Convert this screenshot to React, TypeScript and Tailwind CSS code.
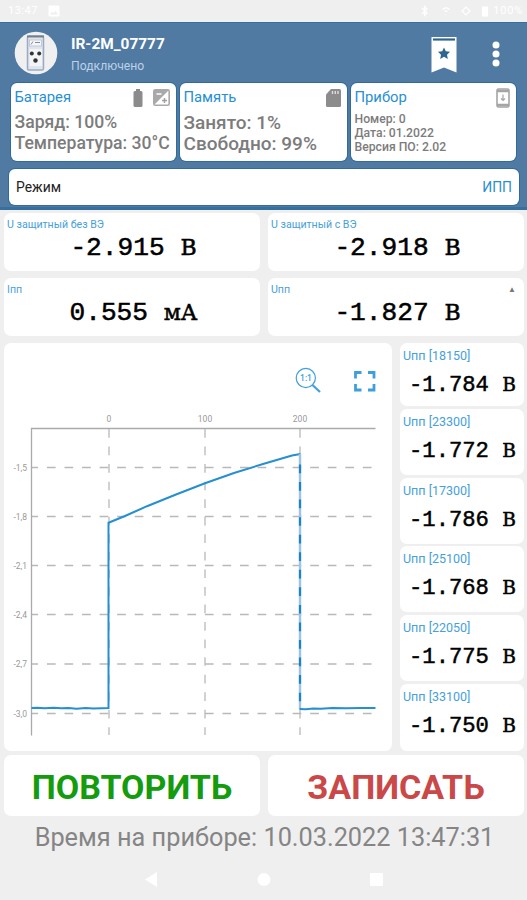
import type { ReactNode } from "react";

const FONT = "font-['Roboto','Open_Sans',sans-serif]";

const samples = [
	{ label: "Uпп [18150]", value: "-1.784", h: "h-[63px]" },
	{ label: "Uпп [23300]", value: "-1.772", h: "h-[66px]" },
	{ label: "Uпп [17300]", value: "-1.786", h: "h-[66px]" },
	{ label: "Uпп [25100]", value: "-1.768", h: "h-[66px]" },
	{ label: "Uпп [22050]", value: "-1.775", h: "h-[66px]" },
	{ label: "Uпп [33100]", value: "-1.750", h: "h-[67px]" },
];

const xTicks = [
	{ x: 109, label: "0" },
	{ x: 205, label: "100" },
	{ x: 300, label: "200" },
];

const yTicks = [
	{ y: 467.5, label: "-1,5" },
	{ y: 516.5, label: "-1,8" },
	{ y: 565.5, label: "-2,1" },
	{ y: 614.5, label: "-2,4" },
	{ y: 664, label: "-2,7" },
	{ y: 713.5, label: "-3,0" },
];

function StatusBar() {
	return (
		<div className="flex h-[22px] shrink-0 items-center pl-2 pr-1 text-[11px] text-white">
			<span className="tracking-[0.5px]">13:47</span>
			<svg className="ml-2.5" width="12" height="12" viewBox="0 0 12 12" fill="#fff">
				<path d="M1.5 0.5h9a1 1 0 0 1 1 1v9a1 1 0 0 1-1 1h-9a1 1 0 0 1-1-1v-9a1 1 0 0 1 1-1zM2 9.5h8L7.5 6 5.5 8.3 4 6.8z" fillRule="evenodd" />
			</svg>
			<svg className="ml-auto" width="69" height="14" viewBox="416 4 69 14" fill="none" stroke="#fff" strokeWidth="1.2">
				<path d="M418 8l5 5-2.5 2.5v-9L423 9l-5 5" />
				<path d="M438.500 10a4 4 0 0 1 7 0M440.500 11.500a2 2 0 0 1 3 0M442 14v.5" />
				<path d="M458 11l4-4 4 4-4 4z" />
				<path d="M478.500 7h5v9h-5z" fill="#fff" />
			</svg>
			<span className="ml-1 tracking-[0.8px]">100%</span>
		</div>
	);
}

function DeviceLogo() {
	return (
		<svg className="shrink-0" width="44" height="44" viewBox="0 0 44 44">
			<circle cx="22" cy="22" r="21.3" fill="#f0f0f0" />
			<rect x="13.5" y="5" width="16" height="34" rx="1.5" fill="#dfe5ee" stroke="#9aacc3" strokeWidth="1.5" />
			<path d="M13 5.5h17" stroke="#777f8b" strokeWidth="2" />
			<rect x="15.5" y="9" width="12" height="6" fill="#f5f6f8" stroke="#b9c3d0" strokeWidth="0.8" />
			<path d="M17 13.5l2-3M21 11.5h5" stroke="#858d98" strokeWidth="1" />
			<rect x="15.5" y="18" width="12.5" height="17" fill="#f3f4f6" />
			<circle cx="17.8" cy="22.5" r="2" fill="#333" />
			<circle cx="25.2" cy="22.5" r="2" fill="#333" />
			<circle cx="21.5" cy="29.5" r="2.2" fill="#333" />
		</svg>
	);
}

function InfoCard({ title, icons, width, children }: { title: string; icons: ReactNode; width: string; children: ReactNode }) {
	return (
		<div className={`${width} h-[78px] rounded-[6px] bg-white pl-[3.500px] pr-1.5 shadow-[0_0_0_1px_#2f6c9e]`}>
			<div className="flex h-[29px] items-center justify-between">
				<span className="text-[14.800px] text-[#2790d3]">{title}</span>
				<div className="flex items-center gap-2.5">{icons}</div>
			</div>
			{children}
		</div>
	);
}

function Header() {
	return (
		<header className="h-[188px] shrink-0 border-b-[3px] border-t border-[#36709f] bg-[#507aa2]">
			<div className="flex h-[60px] items-center pl-3.5 pr-[26px]">
				<DeviceLogo />
				<div className="ml-[13px] mt-1">
					<div className="text-[15.400px] font-bold leading-[17px] text-white">IR-2M_07777</div>
					<div className="mt-[6px] text-[12.200px] leading-[15px] text-[#bcd1e8]">Подключено</div>
				</div>
				<svg className="ml-auto mt-[3px]" width="26" height="38" viewBox="0 0 26 38">
					<path d="M0.5 1h25v35.500l-12.500-5L.5 36.500z" fill="#fff" />
					<path d="M2 3.500h22" stroke="#2f6591" strokeWidth="2.2" />
					<path d="M13 11.500l1.800 3.800 4.200.5-3 2.900.8 4.200-3.800-2.100-3.800 2.100.8-4.200-3-2.900 4.200-.5z" fill="#2f6591" />
				</svg>
				<svg className="ml-[34px] mt-px" width="10" height="28" viewBox="0 0 10 28" fill="#fff">
					<circle cx="5" cy="5" r="3.500" />
					<circle cx="5" cy="14" r="3.500" />
					<circle cx="5" cy="23" r="3.500" />
				</svg>
			</div>

			<div className="flex gap-1 pl-[11px]">
				<InfoCard
					title="Батарея"
					width="w-[165px]"
					icons={
						<>
							<svg width="10" height="18" viewBox="0 0 10 18" fill="#8b8b8b">
								<path d="M3 0h4v2h1a1.500 1.500 0 0 1 1.500 1.500v13A1.500 1.500 0 0 1 8 18H2a1.500 1.500 0 0 1-1.500-1.500v-13A1.500 1.500 0 0 1 2 2h1z" />
							</svg>
							<svg width="17" height="17" viewBox="0 0 17 17">
								<rect x="0.8" y="0.8" width="15.400" height="15.400" rx="1.500" fill="#fff" stroke="#a9a9a9" strokeWidth="1.6" />
								<path d="M1 1h15L1 16z" fill="#a9a9a9" />
								<path d="M9 11.500h5M11.500 9v5" stroke="#a0a0a0" strokeWidth="1.5" />
								<path d="M3.500 5h5" stroke="#fff" strokeWidth="1.5" />
							</svg>
						</>
					}
				>
					<div className="whitespace-nowrap text-[17.600px] font-medium leading-[21px] text-[#7c7c7c]">
						<div>Заряд: 100%</div>
						<div>Температура: 30°C</div>
					</div>
				</InfoCard>
				<InfoCard
					title="Память"
					width="w-[167px]"
					icons={
						<svg width="15" height="18" viewBox="0 0 15 18">
							<path d="M5 0h8.500A1.500 1.500 0 0 1 15 1.500v15a1.500 1.500 0 0 1-1.500 1.500h-12A1.500 1.500 0 0 1 0 16.500V5.500z" fill="#8c8c8c" />
							<path d="M6.500 2v3M9.300 2v3M12 2v3" stroke="#ddd" strokeWidth="1.4" />
						</svg>
					}
				>
					<div className="whitespace-nowrap text-[19px] font-medium leading-[21px] text-[#7c7c7c]">
						<div>Занято: 1%</div>
						<div>Свободно: 99%</div>
					</div>
				</InfoCard>
				<InfoCard
					title="Прибор"
					width="w-[165px]"
					icons={
						<svg width="14" height="20" viewBox="0 0 14 20" fill="none" stroke="#a5a5a5">
							<rect x="1" y="1" width="12" height="18" rx="1.5" strokeWidth="1.6" />
							<path d="M1 3h12M1 17h12" strokeWidth="2.5" />
							<path d="M7 6.500v6M5 10.500l2 2 2-2" strokeWidth="1.2" />
						</svg>
					}
				>
					<div className="whitespace-nowrap text-[12.200px] font-medium leading-[14px] text-[#7c7c7c]">
						<div>Номер: 0</div>
						<div>Дата: 01.2022</div>
						<div>Версия ПО: 2.02</div>
					</div>
				</InfoCard>
			</div>

			<div className="ml-[9px] mt-2 flex h-9 w-[510px] items-center justify-between rounded-[6px] bg-white pl-[7px] pr-[7px] text-[13.900px] shadow-[0_0_0_1px_#2f6c9e]">
				<span className="text-[#222]">Режим</span>
				<span className="text-[#2790d3]">ИПП</span>
			</div>
		</header>
	);
}

function Unit({ text }: { text: string }) {
	return <span className="font-['DejaVu_Serif',serif] text-[0.84em]">{text}</span>;
}

function Reading({ label, value, unit, marker }: { label: string; value: string; unit: string; marker?: boolean }) {
	return (
		<div className="relative h-[58px] flex-1 rounded-[7px] bg-white">
			<div className="pl-[3px] pt-[5px] text-[10.600px] leading-[13px] text-[#479fdb]">{label}</div>
			<div className="mt-[2px] whitespace-pre pl-[3px] text-center font-['Liberation_Mono',monospace] text-[26.200px] leading-[30px] text-black [-webkit-text-stroke:0.5px_#000]">
				{value} <Unit text={unit} />
			</div>
			{marker && <span className="absolute right-2 top-[7px] text-[8px] leading-[10px] text-[#777]">▲</span>}
		</div>
	);
}

function Chart() {
	return (
		<div className="h-[408px] w-[388px] rounded-[7px] bg-white">
			<svg width="388" height="408" viewBox="4 343 388 408" fill="none">
				<g stroke="#42a0da">
					<circle cx="305.800" cy="378" r="9.600" strokeWidth="1.2" />
					<path d="M312.500 385l7.500 7" strokeWidth="2.2" />
				</g>
				<text x="306" y="381" textAnchor="middle" fill="#42a0da" className="text-[8.500px] font-medium">1:1</text>
				<path d="M355.500 378.500v-6h6M368 372.500h6v6M374 384v6h-6M361.500 390h-6v-6" stroke="#3da0dc" strokeWidth="2.8" />

				<g stroke="#b9b9b9" strokeWidth="1.3" strokeDasharray="8.7 8.85">
					{yTicks.map((t) => (
						<path key={t.label} d={`M31 ${t.y}H373`} strokeDashoffset="1.6" />
					))}
					{xTicks.map((t) => (
						<path key={t.label} d={`M${t.x} 429V735`} />
					))}
				</g>
				<path d="M31.500 735.500V428.500H375.500" stroke="#aaa" strokeWidth="1.3" />

				<g fill="#999" className="text-[8.500px]">
					{xTicks.map((t) => (
						<text key={t.label} x={t.x} y="422" textAnchor="middle">{t.label}</text>
					))}
					{yTicks.map((t) => (
						<text key={t.label} x="27" y={t.y + 3} textAnchor="end">{t.label}</text>
					))}
				</g>

				<path
					d="M31.500 708l6-.3 7 .6 9-.5 8 .5 7-.2 8 .6 9-.6 8 .3 15-.4V522.700L125 516 147 506.200 176 494.500 205 483.300 234 473 263 464 292 455.500 300.500 454"
					stroke="#258fd1"
					strokeWidth="2"
				/>
				<path d="M300 454V709" stroke="#9cc4ea" strokeWidth="2.4" />
				<path d="M300 464.500V709" stroke="#1c84c6" strokeWidth="2.2" strokeDasharray="8.7 8.85" />
				<path d="M299.500 709l6 .2 8-.8 7 .3 12-.7 14 .2 14-.3 15 .2" stroke="#258fd1" strokeWidth="2" />
			</svg>
		</div>
	);
}

export default function App() {
	return (
		<main className={`flex h-[900px] w-[527px] flex-col overflow-hidden bg-[#efefef] ${FONT}`}>
			<StatusBar />
			<Header />

			<section className="mt-[3px] flex flex-col gap-[7px] pl-1 pr-[3px]">
				<div className="flex gap-2">
					<Reading label="U защитный без ВЭ" value="-2.915" unit="В" />
					<Reading label="U защитный с ВЭ" value="-2.918" unit="В" />
				</div>
				<div className="flex gap-2">
					<Reading label="Iпп" value="0.555" unit="мА" />
					<Reading label="Uпп" value="-1.827" unit="В" marker />
				</div>
			</section>

			<section className="mt-[7px] flex gap-2 pl-1 pr-[3px]">
				<Chart />
				<div className="flex flex-1 flex-col justify-between">
					{samples.map((s) => (
						<div key={s.label} className={`${s.h} rounded-[7px] bg-white`}>
							<div className="pl-[3px] pt-[5px] text-[12.500px] leading-[15px] text-[#479fdb]">{s.label}</div>
							<div className="mt-[9px] whitespace-pre pl-[9px] font-['Liberation_Mono',monospace] text-[22.200px] leading-[26px] text-black [-webkit-text-stroke:0.5px_#000]">
								{s.value} <Unit text="В" />
							</div>
						</div>
					))}
				</div>
			</section>

			<section className="mt-1 flex gap-2 pl-1 pr-[3px]">
				<button className="h-[61px] flex-1 rounded-[7px] bg-white pt-1 text-[34px] font-bold text-[#149c0e]">ПОВТОРИТЬ</button>
				<button className="h-[61px] flex-1 rounded-[7px] bg-white pt-1 text-[34px] font-bold text-[#ca4848]">ЗАПИСАТЬ</button>
			</section>

			<div className="mt-[7px] pl-[2px] text-center text-[25.300px] leading-[30px] text-[#858585]">Время на приборе: 10.03.2022 13:47:31</div>

			<svg className="mt-3" width="527" height="30" viewBox="0 865 527 30" fill="#fff">
				<path d="M145 879.500l12-7.500v15z" />
				<circle cx="264" cy="879.500" r="6.500" />
				<rect x="370" y="873" width="13" height="13" rx="1" />
			</svg>
		</main>
	);
}
